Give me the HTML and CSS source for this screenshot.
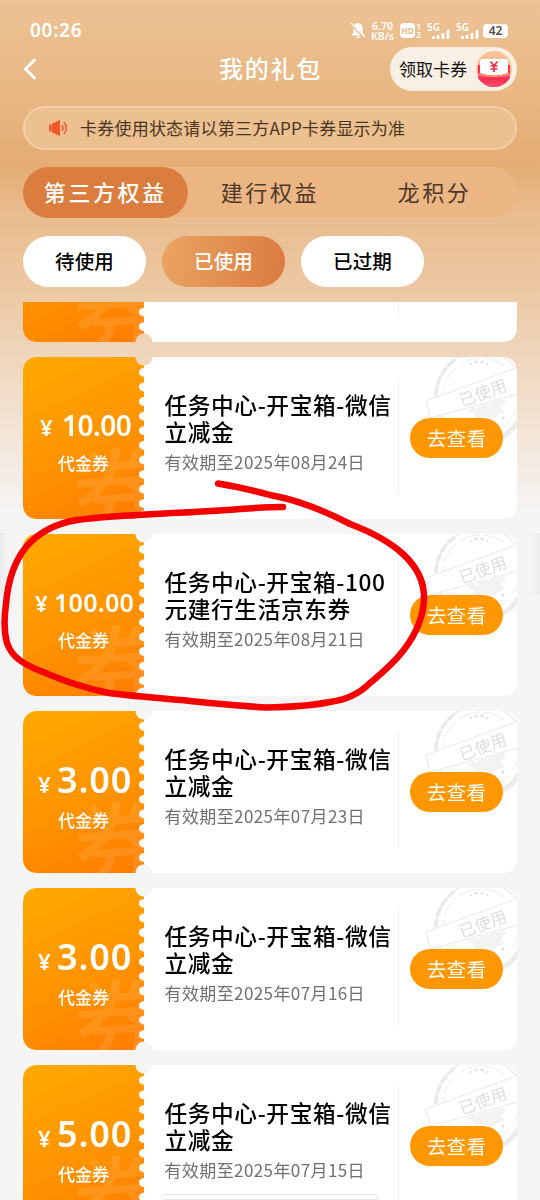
FILE: index.html
```html
<!DOCTYPE html>
<html lang="zh-CN">
<head>
<meta charset="utf-8">
<title>我的礼包</title>
<link rel="stylesheet" href="styles.css">
</head>
<body>
<svg class="defs" width="0" height="0" aria-hidden="true">
  <symbol id="stamp" viewBox="0 0 96 96">
    <g fill="none" stroke="#ececed">
      <circle cx="60" cy="39" r="45" stroke-width="1.500"/>
      <path d="M16 50a45 45 0 0 1 18-47" stroke-width="3.500" stroke="#e9e9ea" stroke-dasharray="9 2"/>
      <path d="M98 63a45 45 0 0 1-24 20" stroke-width="5" stroke="#ececed"/>
      <circle cx="60" cy="39" r="38" stroke-width="1" stroke-dasharray="22 4"/>
      <path d="M5 44 100 9v27L9 61z" fill="#fff" stroke-width="1.200"/>
      <path d="M46 54l5-5 5 3 4-6 8 1 5-6 8 1 4 3-5 6 4 5-9 3-5 4-7-4-7 3-4-6z" fill="#f3f3f4" stroke="none"/>
    </g>
    <g fill="#dedee0"><circle cx="50" cy="7" r="1"/><circle cx="55" cy="5" r="1.500"/><circle cx="61" cy="5" r="1.500"/><circle cx="66" cy="7" r="1"/><circle cx="82" cy="61" r="1.500"/></g>
    <text x="62" y="42" transform="rotate(-20 62 36)" text-anchor="middle" class="stamp-text">已使用</text>
  </symbol>
</svg>

<header class="status">
  <span class="clock">00:26</span>
  <svg class="bell" width="16" height="18" viewBox="0 0 16 18"><path fill="#fff" d="M8 1c3 0 4.500 2.200 4.500 5v4l2 3.500h-13l2-3.500V6C3.500 3.200 5 1 8 1zM6 14.500h4c0 2-4 2-4 0z"/><path d="M0 1l15 15" stroke="#ebbe8d" stroke-width="2.500"/><path d="M1 1l14 14" stroke="#fff" stroke-width="1.300"/></svg>
  <span class="rate"><span>6.70</span><span>KB/s</span></span>
  <span class="hd"><b>HD</b><span class="sims"><i>1</i><i>2</i></span></span>
  <span class="signal"><i>5G</i><svg width="19" height="9" viewBox="0 0 19 9"><path stroke="#fff" stroke-width="2.800" d="M2.500 9V6M7 9V5M12 9V3M17 9V0"/></svg></span>
  <span class="signal"><i>5G</i><svg width="19" height="9" viewBox="0 0 19 9"><path stroke="#fff" stroke-width="2.800" d="M2.500 9V6M7 9V5M12 9V3M17 9V0"/></svg></span>
  <span class="battery">42</span>
</header>

<nav class="titlebar">
  <svg class="back" width="14" height="22" viewBox="0 0 14 22"><path d="M11.500 2 2.500 11l9 9" fill="none" stroke="#fff" stroke-width="3" stroke-linecap="round" stroke-linejoin="round"/></svg>
  <h1>我的礼包</h1>
  <button class="claim"><span>领取卡券</span>
    <svg width="38" height="38" viewBox="0 0 38 38">
      <defs><clipPath id="disc"><circle cx="19" cy="19" r="18"/></clipPath><linearGradient id="red" x2="0" y2="1"><stop stop-color="#ff8a8a"/><stop offset=".35" stop-color="#fb2850"/><stop offset="1" stop-color="#ff5a74"/></linearGradient></defs>
      <g clip-path="url(#disc)"><circle cx="19" cy="19" r="18" fill="#fbc196"/><path fill="#fa2b4b" d="M3 15h32v22H3z"/><path fill="#fff" d="M5 11.500Q5 9 7 9h24q2 0 2 2.500V23q-14 5-28 0z"/><path fill="url(#red)" d="M3 23.500Q19 29 35 23.500V38H3z"/><path d="M4 23.500q15 6 30 0" stroke="#ffb45c" fill="none"/></g>
      <path d="M15.500 11.500 19 15.500l3.500-4M19 15.500V22M15.500 16h7M15.500 19h7" stroke="#f02d48" stroke-width="1.700" fill="none"/>
    </svg>
  </button>
</nav>

<div class="notice">
  <svg width="19" height="16" viewBox="0 0 19 16"><path fill="#f7562b" d="M0 4.500h2.500v7H0zM3 3.500 11 0v16l-8-3.500z"/><path d="M13 5q2 3 0 6M15 2q4.500 6 0 12" stroke="#f7562b" stroke-width="1.500" fill="none"/></svg>
  <span>卡券使用状态请以第三方APP卡券显示为准</span>
</div>

<div class="tabs"><span class="tab on">第三方权益</span><span class="tab">建行权益</span><span class="tab">龙积分</span></div>
<div class="filters"><span class="filter">待使用</span><span class="filter on">已使用</span><span class="filter">已过期</span></div>

<main class="list">
  <div class="scroll">
    <article class="card">
      <div class="value mid"><span class="mark">券</span></div>
      <div class="info"></div>
      <div class="action"></div>
    </article>
    <article class="card">
      <div class="value mid"><span class="mark">券</span><p class="amount"><i>¥</i><b>10.00</b></p><p class="kind">代金券</p></div>
      <div class="info"><h2>任务中心-开宝箱-微信<br>立减金</h2><p>有效期至2025年08月24日</p></div>
      <div class="action"><svg class="stamp"><use href="#stamp"/></svg><button class="view">去查看</button></div>
    </article>
    <article class="card">
      <div class="value small"><span class="mark">券</span><p class="amount"><i>¥</i><b>100.00</b></p><p class="kind">代金券</p></div>
      <div class="info"><h2>任务中心-开宝箱-100<br>元建行生活京东券</h2><p>有效期至2025年08月21日</p></div>
      <div class="action"><svg class="stamp"><use href="#stamp"/></svg><button class="view">去查看</button></div>
    </article>
    <article class="card">
      <div class="value large"><span class="mark">券</span><p class="amount"><i>¥</i><b>3.00</b></p><p class="kind">代金券</p></div>
      <div class="info"><h2>任务中心-开宝箱-微信<br>立减金</h2><p>有效期至2025年07月23日</p></div>
      <div class="action"><svg class="stamp"><use href="#stamp"/></svg><button class="view">去查看</button></div>
    </article>
    <article class="card">
      <div class="value large"><span class="mark">券</span><p class="amount"><i>¥</i><b>3.00</b></p><p class="kind">代金券</p></div>
      <div class="info"><h2>任务中心-开宝箱-微信<br>立减金</h2><p>有效期至2025年07月16日</p></div>
      <div class="action"><svg class="stamp"><use href="#stamp"/></svg><button class="view">去查看</button></div>
    </article>
    <article class="card">
      <div class="value large"><span class="mark">券</span><p class="amount"><i>¥</i><b>5.00</b></p><p class="kind">代金券</p></div>
      <div class="info"><h2>任务中心-开宝箱-微信<br>立减金</h2><p>有效期至2025年07月15日</p><div class="bar"></div></div>
      <div class="action"><svg class="stamp"><use href="#stamp"/></svg><button class="view">去查看</button></div>
    </article>
  </div>
</main>

<svg class="scribble" width="540" height="1200" viewBox="0 0 540 1200"><path d="M218 483.500C238 487 256 491 270 495C298 500 325 511 350 524C374 533 391 543 403 554C417 567 424 580 424 597C424 616 417 633 403 651C392 665 382 673 370 683C359 694 345 700 330 702C310 706 291 707 266 707.500C240 706 210 703 190 701C160 698 130 696 109 693C82 688 63 680 43 672C25 665 12 658 7 643C4 632 4 618 6 604C8 580 14 562 26 547C39 532 58 523 77 520C120 514 170 514 210 511C237 510 255 507 283 507"/></svg>
</body>
</html>
```

FILE: styles.css
```css
* { box-sizing: border-box; margin: 0; padding: 0; }
body {
  position: relative;
  width: 540px;
  height: 1200px;
  overflow: hidden;
  font-family: "Noto Sans CJK SC", "Noto Sans", sans-serif;
  background: linear-gradient(#edc294 0, #e9b985 80px, #e4ad74 165px, #e9bc8f 215px, #edc8a3 290px, #efd4b8 345px, #f3e4d6 430px, #f5f5f5 515px, #f5f5f5 1200px);
}
body::before {
  content: "";
  position: absolute;
  inset: 533px 0 auto;
  height: 62px;
  background: linear-gradient(90deg, #ebebec, transparent 8px, transparent 532px, #ebebec);
}
i { font-style: normal; }
button { border: 0; font-family: inherit; }
.defs { position: absolute; }

.status { display: flex; align-items: center; height: 42px; padding: 19px 23px 0 30px; color: #fff; }
.clock { width: 320px; padding-bottom: 2px; font: 600 19px/22px "Noto Sans", sans-serif; letter-spacing: .7px; }
.bell { flex: none; }
.rate { display: flex; flex-direction: column; width: 25px; margin-left: 4px; font: 600 10.500px/10px "Noto Sans", sans-serif; text-align: center; }
.hd { display: flex; align-items: center; margin-left: 5px; }
.hd b { width: 15px; height: 15px; border-radius: 4px; background: #fff; color: #e9ba88; font: 700 8.500px/15px "Noto Sans", sans-serif; text-align: center; }
.sims { display: flex; flex-direction: column; width: 6px; margin-left: 1px; font: 600 9px/8px "Noto Sans", sans-serif; }
.signal { display: flex; flex-direction: column; flex: none; width: 23px; height: 16px; margin-left: 5px; font: 600 10px/8px "Noto Sans", sans-serif; }
.signal + .signal { margin-left: 6px; }
.signal svg { margin: -1px 0 0 4px; flex: none; }
.battery { flex: none; width: 25px; height: 14px; margin-left: 4px; border-radius: 4px; background: #fff; color: #574c43; font: 600 12px/14px "Noto Sans", sans-serif; text-align: center; }

.titlebar { display: grid; grid-template-columns: 196px 102px 1fr; align-items: center; height: 44px; margin: 5px 23px 0; }
.titlebar h1 { padding-bottom: 2px; color: #fff; font-size: 24px; line-height: 34px; font-weight: 500; letter-spacing: 1.800px; white-space: nowrap; }
.claim { display: flex; align-items: center; justify-content: space-between; justify-self: end; width: 127px; height: 44px; padding: 0 4px 0 9px; border-radius: 22px; background: #f9efe4; color: #111; font-size: 17px; letter-spacing: .1px; white-space: nowrap; }
.claim span { padding-bottom: 2px; }
.claim svg { flex: none; }

.notice { display: flex; align-items: center; gap: 12px; height: 44px; margin: 15px 23px 0; padding-left: 24px; border: 2px solid #f3d0aa; border-radius: 22px; background: #ecc08f; color: #493526; font-size: 17px; letter-spacing: .22px; }
.notice span { padding-bottom: 2px; }

.tabs { display: flex; align-items: center; height: 51px; margin: 17px 23px 0; border-radius: 26px; background: #ecb684; }
.tab { width: 164.600px; height: 51px; color: #4c3829; font-size: 22px; line-height: 48px; letter-spacing: 2.600px; text-align: center; }
.tab.on { border-radius: 26px; background: #da7d3e; color: #fff; font-weight: 500; }
.filters { display: flex; gap: 16px; margin: 18px 23px 0; }
.filter { width: 123px; height: 51px; border-radius: 26px; background: #fff; color: #000; font-size: 19.500px; font-weight: 500; line-height: 50px; letter-spacing: .2px; text-align: center; }
.filter.on { background: linear-gradient(100deg, #eaa562, #da7a41); color: #fff; }

.list { height: 898px; margin-top: 15px; padding: 0 23px; overflow: hidden; }
.scroll { display: flex; flex-direction: column; gap: 15px; margin-top: -122px; }
.card {
  display: grid;
  grid-template-columns: 121px 255px 1fr;
  flex: none;
  height: 162px;
  border-radius: 13px;
  overflow: hidden;
  background: #fff;
  -webkit-mask: radial-gradient(circle at 121px 0, transparent 8px, #000 9px) top / 100% 50% no-repeat, radial-gradient(circle at 121px 100%, transparent 8px, #000 9px) bottom / 100% 50% no-repeat;
  mask: radial-gradient(circle at 121px 0, transparent 8px, #000 9px) top / 100% 50% no-repeat, radial-gradient(circle at 121px 100%, transparent 8px, #000 9px) bottom / 100% 50% no-repeat;
}
.value {
  position: relative;
  overflow: hidden;
  height: 162px;
  color: #fff;
  background: radial-gradient(ellipse 5.500px 4.500px at 100% 50%, #fff 88%, transparent) right 8px / 6px 14.600px repeat-y, linear-gradient(155deg, #ffaa00, #ff9300 55%, #ff7c00);
}
.mark { position: absolute; left: 50px; top: 77px; color: rgba(255, 255, 255, .1); font-size: 88px; font-weight: 500; line-height: 100px; transform: rotate(-4deg); }
.amount { position: relative; display: flex; align-items: baseline; height: 95px; padding-top: 43px; white-space: nowrap; font-family: "Noto Sans", sans-serif; line-height: 50px; }
.amount i { width: 22px; margin-left: 17px; font-size: 22px; font-weight: 600; }
.amount b { font-weight: 600; }
.mid b { font-size: 28px; letter-spacing: -.5px; }
.small i { margin-left: 12px; width: 19px; }
.small b { font-size: 25px; letter-spacing: .3px; }
.large .amount { height: 98px; padding-top: 44px; }
.large i { margin-left: 15px; width: 19px; }
.large b { font-size: 36px; letter-spacing: .9px; }
.kind { position: relative; height: 24px; font-size: 17px; font-weight: 500; line-height: 22px; text-align: center; }
.info { padding: 34px 0 0 20.500px; border-right: 1px dashed #eee; border-image: linear-gradient(transparent 14%, #ededed 14%, #ededed 84%, transparent 84%) 1; white-space: nowrap; }
.info h2 { color: #000; font-size: 22.700px; font-weight: 500; line-height: 27px; letter-spacing: .6px; }
.info p { margin-top: 4px; color: #707070; font-size: 17px; line-height: 26px; letter-spacing: .4px; }
.bar { width: 218px; height: 6px; margin: 11px 0 0 -4px; border: 1px solid #e8e8e8; border-radius: 3px; }
.action { position: relative; padding: 61px 0 0 11px; }
.stamp { position: absolute; top: 0; right: 0; width: 96px; height: 96px; }
.stamp-text { font-family: "Noto Sans CJK SC", sans-serif; font-size: 16.500px; fill: #dedee0; }
.view { position: relative; display: block; width: 93px; height: 40px; border-radius: 20px; background: #ff9800; color: #fff; font-size: 19.500px; line-height: 38px; letter-spacing: .3px; text-align: center; }

.scribble { position: absolute; left: 0; top: 0; pointer-events: none; }
.scribble path { fill: none; stroke: #f40000; stroke-width: 6.500; stroke-linecap: round; stroke-linejoin: round; }
```
